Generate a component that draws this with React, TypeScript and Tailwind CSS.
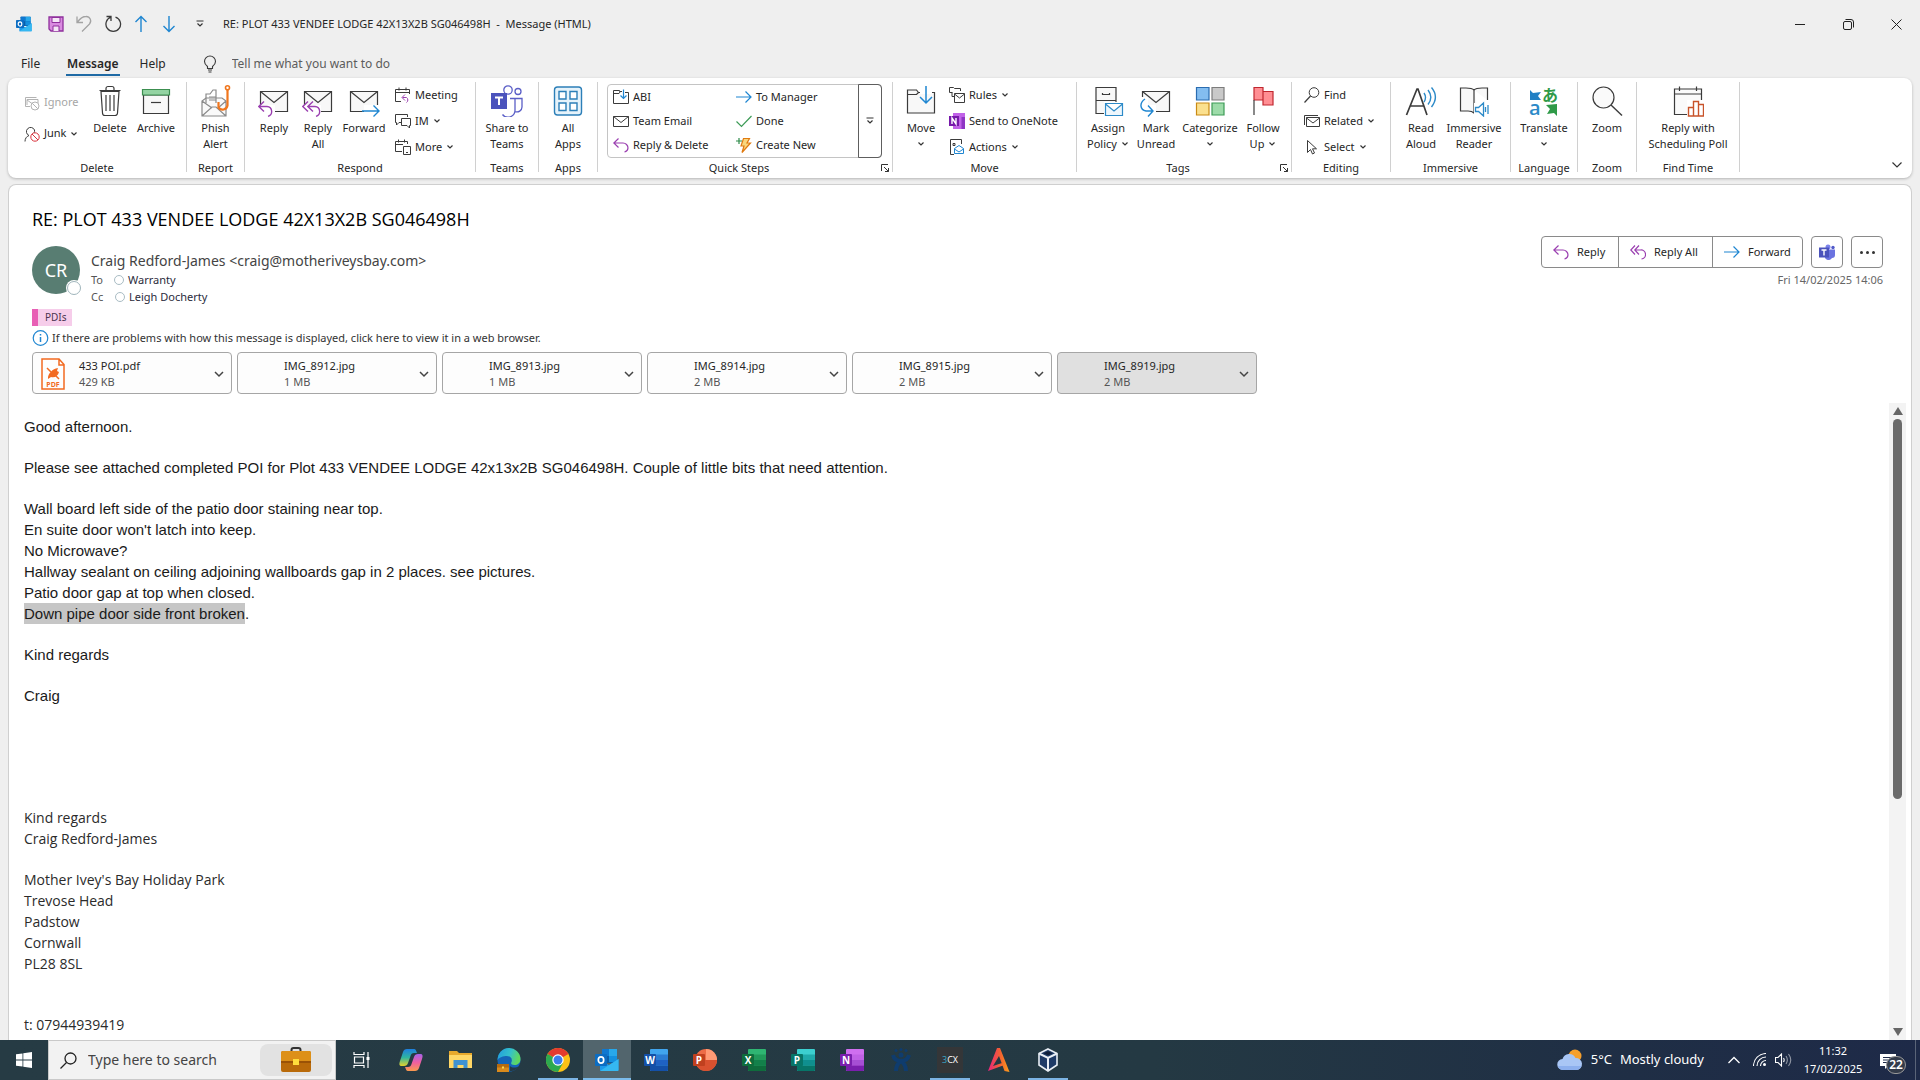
import React from 'react';

type P = { children?: React.ReactNode };

/* ---------- svg helpers ---------- */
const I16 = ({ children }: P) => (
  <svg width="16" height="16" viewBox="0 0 16 16" fill="none" stroke="#3b3b3b" className="shrink-0" aria-hidden="true">{children}</svg>
);
const I32 = ({ children }: P) => (
  <svg width="32" height="32" viewBox="0 0 32 32" fill="none" stroke="#3b3b3b" strokeWidth="1.2" className="shrink-0" aria-hidden="true">{children}</svg>
);
const Caret = () => (
  <svg width="8" height="6" viewBox="0 0 8 6" fill="none" stroke="#333" strokeWidth="1.2" className="shrink-0" aria-hidden="true"><path d="M1.500 1.500 4 4l2.500-2.500" /></svg>
);
const MiniDrop = () => (
  <svg width="10" height="8" viewBox="0 0 10 8" fill="none" stroke="#333" strokeWidth="1.2" aria-hidden="true"><path d="M1.500 1h7M2.500 3.500 5 6l2.500-2.500" /></svg>
);
const Launcher = () => (
  <svg width="10" height="10" viewBox="0 0 10 10" fill="none" stroke="#333" aria-hidden="true"><path d="M1.500 8V1.500H8M4 4l4.500 4.500M8.500 5v3.500H5" /></svg>
);

/* ---------- 16px icons ---------- */
const Outlook = ({ size }: { size: number }) => (
  <svg width={size} height={size} viewBox="0 0 24 24" aria-hidden="true">
    <rect x="7" y="1" width="15" height="14" rx="1" fill="#0a5ea8" />
    <path d="M14 1h8v7h-8z" fill="#28a8ea" /><path d="M7 1h7v7H7z" fill="#0f78d0" /><path d="M14 8h8v6h-8z" fill="#1490df" />
    <path d="M5 12l9 5 9.500-6v11a1 1 0 0 1-1 1H6a1 1 0 0 1-1-1z" fill="#1d9bea" />
    <path d="M5 23 23.500 11v11a1 1 0 0 1-1 1z" fill="#35b8f1" />
    <rect x="0" y="6" width="12" height="12" rx="1" fill="#0c6dc2" />
    <ellipse cx="6" cy="12" rx="2.700" ry="3.200" fill="none" stroke="#fff" strokeWidth="1.700" />
  </svg>
);
const Save = () => <I16><path d="M1 1h14v14H3l-2-2z" fill="#d98be0" stroke="#8f2f9c" strokeWidth="1.300" /><path d="M4 1.500h8v5H4zM5 15v-5h6v5" fill="#f5e6f7" stroke="#8f2f9c" /></I16>;
const Undo = () => <svg width="18" height="18" viewBox="0 0 18 18" fill="none" stroke="#a3a3a3" strokeWidth="1.300" aria-hidden="true"><path d="M2 1.500v6h6M2.500 7C5 3.500 8 1.500 11 1.500a4.500 4.500 0 0 1 3.500 7.500L7 16.500" /></svg>;
const Redo = () => <svg width="18" height="18" viewBox="0 0 18 18" fill="none" stroke="#3b3b3b" strokeWidth="1.300" aria-hidden="true"><path d="M2.500 1.500H7V6M7 2.200a7.300 7.300 0 1 0 4.500 0" /></svg>;
const Arrow = ({ up }: { up?: boolean }) => <svg width="16" height="18" viewBox="0 0 16 18" fill="none" stroke="#1f86d1" strokeWidth="1.400" aria-hidden="true"><path d={up ? 'M8 17V1.500M2.500 7 8 1.500 13.500 7' : 'M8 1v15.500M2.500 11 8 16.500 13.500 11'} /></svg>;
const Bulb = () => <svg width="14" height="18" viewBox="0 0 14 18" fill="none" stroke="#3b3b3b" strokeWidth="1.100" aria-hidden="true"><path d="M4.500 13.500v-2C2.500 10 1.500 8.500 1.500 6.500a5.500 5.500 0 0 1 11 0c0 2-1 3.500-3 5v2zM5 15h4M5.500 17h3" /></svg>;
const Ignore = () => <I16><g stroke="#b3b3b3"><path d="M6 11.500H1.500v-9h11M3 10V4.500h11V8M3 5l5 3.500" /><circle cx="11" cy="11" r="4" fill="#fff" /><path d="m8.200 8.200 5.600 5.600" /></g></I16>;
const Junk = () => <I16><path d="M1 15.500c0-3 1.500-5 4-6A4.200 4.200 0 1 1 10.500 4" /><path d="M10.500 4c.3 1 0 2-.5 3" /><g stroke="#d8323c"><circle cx="11" cy="11" r="4.200" fill="#fff" /><path d="m8 8 6 6" /></g></I16>;
const Meeting = () => <I16><path d="M6 14.500H.500v-12h14V7M.500 5.500h14M4 .500v3M11 .500v3" /><path d="M10 7.500 7 10.500l3 3M7.500 10.500h4a3 3 0 0 1 0 5" stroke="#9a3fb0" /></I16>;
const Im = () => <I16><path d="M6 9.500H4L1.500 12V9.500H.500v-8h12V4" /><path d="M6.500 5.500h9v7h-1V15L12 12.500H6.500z" /></I16>;
const MoreI = () => <I16><path d="M7 12.500H.500v-10h12V5M.500 5.500H8M3.500.500v3M9.500.500v3" /><path d="M8.500 7.500h7v8h-7zM11 13.500h2" stroke="#3b3b3b" /></I16>;
const FolderMove = () => <I16><path d="M9 2.500H6.500V1.500h-6v13h15v-11H12M.500 4.500H6l1-1.500" fill="none" /><path d="M10.500.500v9M7.500 6.500l3 3 3-3" stroke="#1f86d1" strokeWidth="1.200" /></I16>;
const Env = () => <I16><path d="M.500 3.500h15v10H.500zM.500 3.500 8 9.500l7.500-6" /></I16>;
const ReplyS = () => <I16><path d="M5.500 1.500.800 6l4.700 4.500M1 6h9a5 5 0 0 1 5 5v0a4.500 4.500 0 0 1-3.500 4" stroke="#9a3fb0" strokeWidth="1.200" /></I16>;
const ReplyAllS = () => <I16><path d="M5 1.500.800 6 5 10.500M9 1.500 4.800 6 9 10.500M5 6h5.500a4.500 4.500 0 0 1 1 9" stroke="#9a3fb0" strokeWidth="1.200" /></I16>;
const ForwardS = () => <I16><path d="M0 8h15M9.500 2.500 15 8l-5.500 5.500" stroke="#1f86d1" strokeWidth="1.200" /></I16>;
const Tick = () => <I16><path d="m.500 8.500 5 5L15.500 3" stroke="#3c9b56" strokeWidth="1.200" /></I16>;
const Bolt = () => <I16><path d="M7.500 1.500h6L11 6h3.500L6 15.500l2-6.500H5z" fill="#f9d77e" stroke="#e07a10" strokeWidth="1.200" /><path d="M0 4h6M3 1v6" stroke="#2e8b4a" strokeWidth="1.200" /></I16>;
const Rules = () => <I16><path d="M6 9.500H3v-4M3.500 5.500H.500v-5h4l1 1h6V4" /><path d="M5.500 6.500h10v9h-10zM5.500 7l5 4 5-4" /></I16>;
const OneNoteS = () => <svg width="16" height="16" viewBox="0 0 16 16" className="shrink-0" aria-hidden="true"><path d="M4 0h12v16H4z" fill="#c162e8" /><path d="M12.500 4H16v12h-3.500z" fill="#8f35c4" /><path d="M0 3h10v10H0z" fill="#7719aa" /><path d="M3 11V5l4 6V5" stroke="#fff" strokeWidth="1.400" fill="none" /></svg>;
const ActionsI = () => <I16><path d="M5 15.500H1.500v-15h11V5M4 4.500h2v2H4z" /><path d="M5.500 9.500 10 6.500l4.500 3v5h-9zM5.500 10l4.500 3 4.500-3" stroke="#1f86d1" /></I16>;
const Find = () => <I16><circle cx="10" cy="5.500" r="4.800" /><path d="M6.500 9 .500 15.500" strokeWidth="1.200" /></I16>;
const Related = () => <I16><path d="M.500 12V2.500H14M2.500 4.500h13v9h-13zM2.500 5 9 10l6.500-5" /></I16>;
const Cursor = () => <I16><path d="M3.500 1.500v12l3-3 2 4.500 2-1-2-4.200h4z" /></I16>;

/* ---------- 32px icons ---------- */
const BigEnv = ({ children }: P) => <I32><path d="M2.500 6.500h27v20h-27z" fill="#f8f8f8" /><path d="M2.500 6.500 16 17.500l13.500-11" />{children}</I32>;
const Trash = () => <I32><path d="M7 6.500 8.500 28a2.500 2.500 0 0 0 2.500 2.500h10a2.500 2.500 0 0 0 2.500-2.500L25 6.500z" fill="#fff" /><path d="M5.500 5.500h21M12 5.500v-2a2 2 0 0 1 2-2h4a2 2 0 0 1 2 2v2M12 10v16M16 10v16M20 10v16" /></I32>;
const Archive = () => <I32><path d="M3.500 10h25v18.500h-25z" fill="#f8f8f8" /><path d="M2.500 4.500h27V10h-27z" fill="#93d3a2" stroke="#3c8f50" /><path d="M11 17.500h10" /></I32>;
const Phish = () => <I32><path d="M2 31V16l4-3h16l4 3v15zM2 31l10-9h4l10 9M2 16l10 7M26 16l-8 7" stroke="#8a8a8a" fill="#fafafa" /><path d="M6 18V9h4l3-4h3v13M9 12h7M9 15h7" stroke="#8a8a8a" /><path d="M27.500 3.500v17a5 5 0 0 1-9 2V17" stroke="#f0761d" strokeWidth="2.200" /><circle cx="27.500" cy="2.800" r="2" stroke="#f0761d" strokeWidth="1.600" fill="#fff" /></I32>;
const ReplyL = () => <BigEnv><path d="M0 20h17v12H0z" fill="#fff" stroke="none" /><path d="M6 16.500.800 21.500 6 26.500M1 21.500h8a5 5 0 0 1 1 9.800" stroke="#9a3fb0" strokeWidth="1.400" /></BigEnv>;
const ReplyAllL = () => <BigEnv><path d="M0 20h19v12H0z" fill="#fff" stroke="none" /><path d="M6 16.500.800 21.500 6 26.500M11 16.500 5.800 21.500l5.200 5M6 21.500h7a5 5 0 0 1 1 9.800" stroke="#9a3fb0" strokeWidth="1.400" /></BigEnv>;
const ForwardL = () => <BigEnv><path d="M16 20h16v12H16z" fill="#fff" stroke="none" /><path d="M14 26h17M25.500 20.500 31 26l-5.500 5.500" stroke="#1f86d1" strokeWidth="1.400" /></BigEnv>;
const TeamsL = () => <I32><g stroke="#5b5fc7" strokeWidth="1.300"><circle cx="17" cy="5" r="4.200" fill="#fff" /><circle cx="27" cy="6.500" r="3" fill="#fff" /><path d="M19 13.500h5V25a7 7 0 0 1-12.500 4.500M24 13.500h7V22a5 5 0 0 1-7 4.500" /></g><path d="M0 8h16v16H0z" fill="#4b53bc" stroke="none" /><path d="M4 12.500h8M8 12.500V20" stroke="#fff" strokeWidth="2" /></I32>;
const AppsL = () => <I32><g stroke="#2c7fb8" strokeWidth="1.400"><rect x="2.500" y="2" width="27" height="28" rx="3" fill="#e6f3fb" /><path d="M7 6.500h7v7.500H7zM18 6.500h7v7.500h-7zM7 18h7v7.500H7zM18 18h7v7.500h-7z" fill="#fff" /></g></I32>;
const MoveL = () => <I32><path d="M2.500 5h9l2 2.500h16V28h-27z" fill="#f8f8f8" /><path d="M2.500 9.500h9l2-2" /><path d="M15 4h12v5H15z" fill="#fff" stroke="none" /><path d="M21 1v17M15 12l6 6 6-6" stroke="#1f86d1" strokeWidth="1.500" /></I32>;
const Policy = () => <I32><path d="M4 2.500h20v26H4z" fill="#f8f8f8" /><path d="M4 15.500h20M10.500 8v1.500h7V8" /><path d="M12 17h20v15H12z" fill="#fff" stroke="none" /><path d="M13.500 18.500h17v12h-17zM13.500 19l8.500 7 8.500-7" stroke="#2c8ac8" fill="#eef7fd" /></I32>;
const Unread = () => <BigEnv><path d="M0 12h8v8h8v12H0z" fill="#fff" stroke="none" /><path d="M5 14c-6 4-5 11 1 12h6M8 20.500l5 5.500-5 5.500" stroke="#1f86d1" strokeWidth="1.400" /></BigEnv>;
const Categ = () => <I32><path d="M2.500 2.500h12.500V15H2.500z" fill="#83bdf0" stroke="#2a6cb0" /><path d="M18 2.500h12V15H18z" fill="#c9c9c9" stroke="#7c7c7c" /><path d="M2.500 18H15v12H2.500z" fill="#fbe08e" stroke="#c98a14" /><path d="M18 18h12v12H18z" fill="#9ddba9" stroke="#3c9b56" /></I32>;
const Flag = () => <I32><path d="M7 2.500h9V15H7zM16 6.500h10V20H16z" fill="#ff8e93" stroke="#c0272f" /><path d="M7 15v15" /></I32>;
const ReadAloud = () => <I32><path d="M1.500 30 12 4h1l9 26M5.500 21h13" strokeWidth="1.700" /><g stroke="#2c8ac8" strokeWidth="1.400"><path d="M19 8c2 3 2 6 0 9M23 5c3.500 4.500 3.500 10 0 14.500M26.500 2.500c5 6 5 13 0 19.500" /></g></I32>;
const Reader = () => <I32><path d="M16 5c-2-2-6-2-8-2H2.500v23H10c3 0 5 1 6 2 1-1 2-1.500 4-2M16 5c2-2 5-2 8-2h5.500v12" fill="#f8f8f8" /><path d="M16 5v22" /><path d="M16 18h16v14H16z" fill="#fff" stroke="none" /><path d="M17.500 22.500h3l5-4.500v13l-5-4.500h-3zM27.500 22v5M30 20v9" stroke="#2c8ac8" strokeWidth="1.300" /></I32>;
const Translate = () => (
  <svg width="32" height="32" viewBox="0 0 32 32" className="shrink-0 overflow-visible" aria-hidden="true">
    <path d="M2 5l3 3 8-1-3 4 3 4H2z" fill="#2180c4" /><path d="M29 19v12l-3-3-7 1 3-5-4-4z" fill="#2f9a48" />
    <text x="1" y="30" fontSize="20" fontFamily="Open Sans, sans-serif" fontWeight="600" fill="#2c8ac8">a</text>
    <text x="14" y="16" fontSize="16" fontFamily="Noto Sans CJK JP, sans-serif" fontWeight="700" fill="#2f9a48">あ</text>
  </svg>
);
const ZoomL = () => <I32><circle cx="12.500" cy="12.500" r="10.500" fill="#fafafa" /><path d="m20 20 11 10.500" strokeWidth="1.400" /></I32>;
const Poll = () => <I32><path d="M2.500 4h27v25.500h-27z" fill="#fafafa" /><path d="M2.500 9h27M7.500 1.500V6M24.500 1.500V6" /><path d="M15 15h17v17H15z" fill="#fff" stroke="none" /><path d="M16.500 22.500h5V31h-5zM21.500 16.500h5V31h-5zM26.500 19.500h5V31h-5z" stroke="#c8532a" fill="#fff" strokeWidth="1.400" /></I32>;

/* ---------- ribbon pieces ---------- */
const Big = ({ icon, a, b, caret, w }: { icon: React.ReactNode; a: string; b?: string; caret?: boolean; w: string }) => (
  <button className={'flex flex-col items-center gap-[3px] pt-[3px] shrink-0 whitespace-nowrap ' + w}>
    {icon}
    <span className="flex flex-col items-center leading-4">
      <span>{a}</span>
      {(b || caret) && <span className="flex h-4 items-center gap-1">{b}{caret && <Caret />}</span>}
    </span>
  </button>
);
const Small = ({ icon, t, caret, h = 'h-[26px]', c = '' }: { icon: React.ReactNode; t: string; caret?: boolean; h?: string; c?: string }) => (
  <button className={'flex items-center gap-1 whitespace-nowrap ' + h + ' ' + c}>{icon}<span>{t}</span>{caret && <Caret />}</button>
);
const Group = ({ label, w, launch, children }: P & { label: string; w: string; launch?: boolean }) => (
  <section className={'flex shrink-0 ' + w} aria-label={label}>
    <div className="flex min-w-0 flex-1 flex-col">
      <div className="flex h-[78px]">{children}</div>
      <div className="flex h-4 items-center">
        <span className="flex-1 text-center">{label}</span>
        {launch && <button aria-label={label + ' settings'} className="w-3"><Launcher /></button>}
      </div>
    </div>
    <div className="h-[90px] w-px bg-[#d0d0d0]" />
  </section>
);

/* ---------- message data ---------- */
const files = [
  ['433 POI.pdf', '429 KB'], ['IMG_8912.jpg', '1 MB'], ['IMG_8913.jpg', '1 MB'],
  ['IMG_8914.jpg', '2 MB'], ['IMG_8915.jpg', '2 MB'], ['IMG_8919.jpg', '2 MB'],
];
const Pdf = () => (
  <svg width="24" height="32" viewBox="0 0 24 32" fill="none" stroke="#f26a21" strokeWidth="1.500" aria-hidden="true">
    <path d="M1 1h17l5 5.500V31H1zM18 1v6h5" />
    <path d="M7 19c1-4 4-8 10-9l-1 3 2 1c-1 4-4 6-8 5l-3 2zM8 12l4 3" fill="#f26a21" stroke="none" />
    <path d="m6 10 4 4M14 17l4 4" />
    <text x="12" y="28.500" textAnchor="middle" fontSize="7" fontWeight="700" fontFamily="Open Sans, sans-serif" fill="#f26a21" stroke="none">PDF</text>
  </svg>
);
const Gap = () => <div className="h-5" />;

/* ---------- taskbar icons ---------- */
const Office = ({ l, a, b, c, d, round }: { l: string; a: string; b: string; c: string; d: string; round?: boolean }) => (
  <svg width="24" height="22" viewBox="0 0 24 22" aria-hidden="true">
    {round ? (
      <><circle cx="13" cy="11" r="11" fill={a} /><path d="M13 0a11 11 0 0 1 11 11H13z" fill={b} /><path d="M2 11h22a11 11 0 0 1-22 0z" fill={c} /></>
    ) : (
      <><rect x="6" width="18" height="22" rx="1" fill={a} /><path d="M6 5.500h18V11H6z" fill={b} /><path d="M6 11h18v5.500H6z" fill={c} /><path d="M6 16.500h18V21a1 1 0 0 1-1 1H7a1 1 0 0 1-1-1z" fill={d} /></>
    )}
    <rect y="5" width="12" height="12" rx="1" fill={d} />
    <text x="6" y="14.500" textAnchor="middle" fontSize="10" fontWeight="700" fontFamily="Open Sans, sans-serif" fill="#fff">{l}</text>
  </svg>
);
const TaskView = () => <svg width="18" height="18" viewBox="0 0 18 18" fill="none" stroke="#fff" strokeWidth="1.200" aria-hidden="true"><path d="M1 1v2.500h10V1M1 17v-2.500h10V17M1.500 6h9v6h-9zM15 1v16" /><path d="M13.500 6h3v3h-3z" fill="#fff" stroke="none" /></svg>;
const Copilot = () => (
  <svg width="24" height="24" viewBox="0 0 24 24" aria-hidden="true">
    <defs>
      <linearGradient id="cpa" x1="0" y1="0" x2="0" y2="1"><stop offset="0" stopColor="#1f7fe0" /><stop offset=".5" stopColor="#2fb6a0" /><stop offset="1" stopColor="#e6d02c" /></linearGradient>
      <linearGradient id="cpb" x1="0" y1="0" x2="0" y2="1"><stop offset="0" stopColor="#a862ea" /><stop offset=".5" stopColor="#ef5fa0" /><stop offset="1" stopColor="#f99a4d" /></linearGradient>
    </defs>
    <path d="M8 1h7c2 0 2 2 3 4h-3c-2 0-3 1-3.500 3L9 15c-.500 2-2 3-4 3H3c-3 0-3-2-2-5L4 4c.600-2 2-3 4-3z" fill="url(#cpa)" />
    <path d="M16 23H9c-2 0-2-2-3-4h3c2 0 3-1 3.500-3L15 9c.500-2 2-3 4-3h2c3 0 3 2 2 5l-3 9c-.600 2-2 3-4 3z" fill="url(#cpb)" />
  </svg>
);
const Explorer = () => <svg width="23" height="20" viewBox="0 0 23 20" aria-hidden="true"><path d="M0 1h8l2 2h13v15H0z" fill="#e8a92c" /><path d="M0 5h23v13H0z" fill="#ffd766" /><path d="M4.500 10h14v8h-4v-3h-6v3h-4z" fill="#3f92d2" /></svg>;
const Edge = () => (
  <svg width="26" height="24" viewBox="0 0 26 24" aria-hidden="true">
    <defs><linearGradient id="edg" x1="0" y1="0" x2="1" y2=".3"><stop offset="0" stopColor="#1f9be0" /><stop offset=".6" stopColor="#35c1c9" /><stop offset="1" stopColor="#5fd860" /></linearGradient></defs>
    <circle cx="13" cy="12" r="11.500" fill="#1565b8" />
    <path d="M1.500 12A11.500 11.500 0 0 1 24.500 11c0 4-3 6-6 6s-4-1-3-3c1.500-4-2-6.500-6-6s-7 2-8 4z" fill="url(#edg)" />
    <path d="M14 18c2 2 6 2 9 0-2 4-6 5.500-9 5z" fill="#263a44" />
    <path d="M1 16h12v8H1z" fill="#d98a1c" /><path d="M1 16h12v3.500H1z" fill="#b56a10" /><path d="M6 18.500h2v2H6z" fill="#ffd94d" />
  </svg>
);
const Chrome = () => <svg width="24" height="24" viewBox="0 0 24 24" aria-hidden="true"><circle cx="12" cy="12" r="12" fill="#fbc116" /><path d="M12 12 1.600 6A12 12 0 0 1 22.400 6z" fill="#e33b2e" /><path d="M12 12 1.600 6A12 12 0 0 0 12 24l5-9z" fill="#2da94f" /><circle cx="12" cy="12" r="5.700" fill="#fff" /><circle cx="12" cy="12" r="4.500" fill="#3b7ded" /></svg>;
const Jira = () => <svg width="20" height="24" viewBox="0 0 20 24" fill="none" stroke="#0f3c6e" strokeWidth="4" aria-hidden="true"><path d="M2 7c1 4 4 6 8 6s7-2 8-6M5 23c0-5 2-8 5-10 3 2 5 5 5 10" /><g fill="#0f3c6e" stroke="none"><circle cx="10" cy="7" r="2.500" /><circle cx="5" cy="2.500" r="1.500" /><circle cx="10" cy="1.500" r="1.500" /><circle cx="15" cy="2.500" r="1.500" /></g></svg>;
const Cx = () => <svg width="26" height="26" viewBox="0 0 26 26" aria-hidden="true"><path d="M0 0h26v26H0z" fill="#343638" /><text x="13" y="16" textAnchor="middle" fontSize="9" fontFamily="Open Sans, sans-serif" fill="#fff"><tspan fill="#38a8c8">3</tspan>CX</text></svg>;
const AIcon = () => <svg width="22" height="24" viewBox="0 0 22 24" fill="none" aria-hidden="true"><defs><linearGradient id="aic"><stop offset="0" stopColor="#e8247c" /><stop offset=".6" stopColor="#f4652e" /><stop offset="1" stopColor="#fba01c" /></linearGradient></defs><path d="M9 0h3l9.500 24-5-1L11 8 5 18l9-3 1 2.500L0 23z" fill="url(#aic)" /></svg>;
const VBox = () => <svg width="20" height="24" viewBox="0 0 20 24" aria-hidden="true"><path d="M10 1 19 5.500V17l-9 6-9-6V5.500z" fill="#1d3a66" stroke="#e8eef5" strokeWidth="1.600" /><path d="M1 5.500 10 10l9-4.500M10 10v13" fill="none" stroke="#e8eef5" strokeWidth="2" /><path d="m5.500 5.200 4.500-2 4.500 2-4.500 2z" fill="#0d1d38" /></svg>;
const Briefcase = () => <svg width="30" height="26" viewBox="0 0 30 26" aria-hidden="true"><path d="M10.500 5V3a2 2 0 0 1 2-2h5a2 2 0 0 1 2 2v2" fill="none" stroke="#333" strokeWidth="2" /><rect y="4" width="30" height="21" rx="2" fill="#b96a0a" /><path d="M0 6a2 2 0 0 1 2-2h26a2 2 0 0 1 2 2v8H0z" fill="#dd9018" /><path d="M0 14h30v2H0z" fill="#9a5206" /><path d="M12 12h6v6h-6z" fill="#ffdd3c" /></svg>;

const apps: [string, React.ReactNode, string][] = [
  ['Task View', <TaskView />, ''],
  ['Copilot', <Copilot />, ''],
  ['File Explorer', <Explorer />, ''],
  ['Edge', <Edge />, ''],
  ['Chrome', <Chrome />, 'run'],
  ['Outlook', <Outlook size={24} />, 'on'],
  ['Word', <Office l="W" a="#41a5ee" b="#2b7cd3" c="#1f62c4" d="#1450a8" />, ''],
  ['PowerPoint', <Office l="P" a="#ed6c47" b="#ff9a75" c="#d9512f" d="#c0401f" round />, ''],
  ['Excel', <Office l="X" a="#2fb572" b="#21995a" c="#13804a" d="#0f6c3c" />, ''],
  ['Publisher', <Office l="P" a="#3ccfcf" b="#1fa9a9" c="#0f8f8f" d="#077568" />, ''],
  ['OneNote', <Office l="N" a="#cf6ff0" b="#c062e6" c="#a64fd4" d="#7a1fad" />, ''],
  ['Jira', <Jira />, ''],
  ['3CX', <Cx />, 'run'],
  ['Atera', <AIcon />, ''],
  ['VirtualBox', <VBox />, 'run'],
];

export default function App() {
  return (
    <div className="flex h-screen flex-col overflow-hidden bg-[#efefef] font-['Noto_Sans','Open_Sans',sans-serif] text-[11px] text-[#262626]">
      {/* title bar */}
      <header className="flex h-12 shrink-0 items-center">
        <div className="flex items-center gap-[13px] pl-4">
          <Outlook size={16} />
          <div className="flex items-center gap-[11px] pl-[3px]">
            <button aria-label="Save"><Save /></button>
            <button aria-label="Undo"><Undo /></button>
            <button aria-label="Redo"><Redo /></button>
            <button aria-label="Previous item"><Arrow up /></button>
            <button aria-label="Next item" className="px-px"><Arrow /></button>
            <button aria-label="Customise toolbar" className="px-1.5"><MiniDrop /></button>
          </div>
        </div>
        <h1 className="whitespace-pre pl-3">RE: PLOT 433 VENDEE LODGE 42X13X2B SG046498H  -  Message (HTML)</h1>
        <div className="ml-auto flex">
          <button aria-label="Minimise" className="flex h-12 w-12 items-center justify-center"><svg width="10" height="10" stroke="#222"><path d="M0 5.500h10" /></svg></button>
          <button aria-label="Restore" className="flex h-12 w-12 items-center justify-center"><svg width="11" height="11" viewBox="0 0 11 11" fill="none" stroke="#222"><rect x=".5" y="2.500" width="8" height="8" rx="1.500" /><path d="M2.500.500h5.500a2.500 2.500 0 0 1 2.500 2.500v5.500" /></svg></button>
          <button aria-label="Close" className="flex h-12 w-12 items-center justify-center"><svg width="11" height="11" viewBox="0 0 11 11" stroke="#222"><path d="m.500.500 10 10m0-10-10 10" /></svg></button>
        </div>
      </header>

      {/* tabs */}
      <nav className="flex h-[30px] shrink-0 items-start pl-[21px] text-xs">
        <button className="h-8 w-[45px] text-left">File</button>
        <button className="flex h-7 items-end border-b-2 border-[#1f6aa5] px-px font-semibold leading-5">Message</button>
        <button className="ml-5 h-8">Help</button>
        <label className="flex h-8 items-center gap-[15px] pl-[37px]">
          <Bulb />
          <input aria-label="Tell me what you want to do" placeholder="Tell me what you want to do" className="w-52 bg-transparent outline-none placeholder:text-[#5c5c5c]" />
        </label>
      </nav>

      {/* ribbon */}
      <div className="mx-2 flex h-[100px] shrink-0 items-start rounded-lg bg-white pt-1 shadow-[0_1px_3px_rgba(0,0,0,0.25)]">
        <Group label="Delete" w="w-[179px]">
          <div className="flex w-20 flex-col pl-4 pt-[5px]">
            <Small icon={<Ignore />} t="Ignore" h="h-[31px]" c="text-[#a6a6a6]" />
            <Small icon={<Junk />} t="Junk" caret h="h-[31px]" />
          </div>
          <Big icon={<Trash />} a="Delete" w="w-11" />
          <Big icon={<Archive />} a="Archive" w="w-12" />
        </Group>
        <Group label="Report" w="w-[58px]">
          <Big icon={<Phish />} a="Phish" b="Alert" w="w-full" />
        </Group>
        <Group label="Respond" w="w-[231px]">
          <div className="flex pl-[7px]">
            <Big icon={<ReplyL />} a="Reply" w="w-11" />
            <Big icon={<ReplyAllL />} a="Reply" b="All" w="w-11" />
            <Big icon={<ForwardL />} a="Forward" w="w-12" />
          </div>
          <div className="flex flex-col pl-[7px]">
            <Small icon={<Meeting />} t="Meeting" />
            <Small icon={<Im />} t="IM" caret />
            <Small icon={<MoreI />} t="More" caret />
          </div>
        </Group>
        <Group label="Teams" w="w-[63px]"><Big icon={<TeamsL />} a="Share to" b="Teams" w="w-full" /></Group>
        <Group label="Apps" w="w-[59px]"><Big icon={<AppsL />} a="All" b="Apps" w="w-full" /></Group>
        <Group label="Quick Steps" w="w-[295px]" launch>
          <div className="ml-[9px] mt-0.5 flex h-[74px] w-[275px] rounded border border-[#c4c4c4]">
            <div className="grid flex-1 grid-cols-2 pl-[5px]">
              <Small icon={<FolderMove />} t="ABI" h="h-6" />
              <Small icon={<ForwardS />} t="To Manager" h="h-6" />
              <Small icon={<Env />} t="Team Email" h="h-6" />
              <Small icon={<Tick />} t="Done" h="h-6" />
              <Small icon={<ReplyS />} t="Reply & Delete" h="h-6" />
              <Small icon={<Bolt />} t="Create New" h="h-6" />
            </div>
            <button aria-label="More quick steps" className="-m-px flex w-6 items-center justify-center rounded-r border border-[#5e5e5e]"><MiniDrop /></button>
          </div>
        </Group>
        <Group label="Move" w="w-[184px]">
          <Big icon={<MoveL />} a="Move" caret w="w-14" />
          <div className="flex flex-col">
            <Small icon={<Rules />} t="Rules" caret />
            <Small icon={<OneNoteS />} t="Send to OneNote" />
            <Small icon={<ActionsI />} t="Actions" caret />
          </div>
        </Group>
        <Group label="Tags" w="w-[215px]" launch>
          <div className="flex pl-1.5">
            <Big icon={<Policy />} a="Assign" b="Policy" caret w="w-[50px]" />
            <Big icon={<Unread />} a="Mark" b="Unread" w="w-[46px]" />
            <Big icon={<Categ />} a="Categorize" caret w="w-[62px]" />
            <Big icon={<Flag />} a="Follow" b="Up" caret w="w-11" />
          </div>
        </Group>
        <Group label="Editing" w="w-[99px]">
          <div className="flex flex-col pl-3">
            <Small icon={<Find />} t="Find" />
            <Small icon={<Related />} t="Related" caret />
            <Small icon={<Cursor />} t="Select" caret />
          </div>
        </Group>
        <Group label="Immersive" w="w-[120px]">
          <div className="flex pl-[5px]">
            <Big icon={<ReadAloud />} a="Read" b="Aloud" w="w-[50px]" />
            <Big icon={<Reader />} a="Immersive" b="Reader" w="w-[56px]" />
          </div>
        </Group>
        <Group label="Language" w="w-[67px]"><Big icon={<Translate />} a="Translate" caret w="w-full" /></Group>
        <Group label="Zoom" w="w-[59px]"><Big icon={<ZoomL />} a="Zoom" w="w-full" /></Group>
        <Group label="Find Time" w="w-[103px]"><Big icon={<Poll />} a="Reply with" b="Scheduling Poll" w="w-full" /></Group>
        <button aria-label="Collapse ribbon" className="mb-2 ml-auto mr-[10px] self-end"><svg width="10" height="10" viewBox="0 0 10 10" fill="none" stroke="#333" strokeWidth="1.200"><path d="m.500 2.500 4.500 4.500 4.500-4.500" /></svg></button>
      </div>

      {/* message */}
      <main className="mx-2 mt-[6px] flex min-h-0 flex-1 flex-col rounded-t-lg border border-b-0 border-[#cfcfcf] bg-white">
        <div className="flex shrink-0 justify-between pl-[23px] pr-[28px]">
          <div>
            <h2 className="pt-[22px] font-['Open_Sans',sans-serif] text-lg leading-6 text-black">RE: PLOT 433 VENDEE LODGE 42X13X2B SG046498H</h2>
            <div className="mt-[15px] flex gap-[11px]">
              <div className="relative flex h-12 w-12 items-center justify-center rounded-full bg-[#587d72] text-lg text-white">
                CR<span className="absolute -bottom-px -right-px h-3.5 w-3.5 rounded-full border border-[#9fb5bb] bg-white ring-1 ring-white" />
              </div>
              <div className="pt-[5px]">
                <p className="text-sm leading-5 text-[#444]">Craig Redford-James &lt;craig@motheriveysbay.com&gt;</p>
                <p className="flex h-[18px] items-center text-[#555]"><span className="w-[23px]">To</span><span className="mr-1 h-2.5 w-2.5 rounded-full border border-[#a9bcc4]" /><span className="text-[#2b2b3b]">Warranty</span></p>
                <p className="flex h-4 items-center text-[#555]"><span className="w-6">Cc</span><span className="mr-1 h-2.5 w-2.5 rounded-full border border-[#a9bcc4]" /><span className="text-[#2b2b3b]">Leigh Docherty</span></p>
              </div>
            </div>
            <span className="mt-1 flex h-[17px] w-10 items-center border-l-[6px] border-[#e85fb5] bg-[#f6cdea] pl-[7px] text-[10px] text-[#4a3350]">PDIs</span>
            <p className="mt-1 flex h-4 items-center gap-[3px] text-[#333]">
              <svg width="17" height="16" viewBox="0 0 17 16" fill="none" stroke="#1f86d1" strokeWidth="1.200" aria-hidden="true"><circle cx="8.500" cy="8" r="7.300" /><path d="M8.500 7v5M8.500 4v1.500" strokeWidth="1.500" /></svg>
              If there are problems with how this message is displayed, click here to view it in a web browser.
            </p>
          </div>
          <div className="flex flex-col items-end gap-1 pt-[51px]">
            <div className="flex gap-2">
              <div className="flex h-8 divide-x divide-[#8a8a8a] rounded border border-[#8a8a8a]">
                <button className="flex w-[77px] items-center gap-2 pl-[11px]"><ReplyS />Reply</button>
                <button className="flex w-[94px] items-center gap-2 whitespace-nowrap pl-[11px]"><ReplyAllS />Reply All</button>
                <button className="flex w-[89px] items-center gap-2 pl-[11px]"><ForwardS />Forward</button>
              </div>
              <button aria-label="Share to Teams" className="flex h-8 w-8 items-center justify-center rounded border border-[#8a8a8a]">
                <svg width="16" height="16" viewBox="0 0 16 16" aria-hidden="true"><circle cx="9" cy="3" r="2.500" fill="#7b83eb" /><circle cx="14" cy="3.500" r="1.700" fill="#5059c9" /><path d="M6 5.500h10V11a3 3 0 0 1-3 3 4 4 0 0 1-7 0z" fill="#6b73e0" /><path d="M0 3.500h10v10H0z" fill="#4b53bc" /><path d="M2.500 6h5M5 6v5.500" stroke="#fff" strokeWidth="1.400" /></svg>
              </button>
              <button aria-label="More actions" className="flex h-8 w-8 items-center justify-center gap-[3px] rounded border border-[#8a8a8a]">
                <i className="h-[3px] w-[3px] rounded-full bg-[#333]" /><i className="h-[3px] w-[3px] rounded-full bg-[#333]" /><i className="h-[3px] w-[3px] rounded-full bg-[#333]" />
              </button>
            </div>
            <time className="leading-4 text-[#666]">Fri 14/02/2025 14:06</time>
          </div>
        </div>

        <ul className="mt-1.5 flex shrink-0 gap-[5px] pl-[23px]">
          {files.map(([n, s], i) => (
            <li key={n} className={'flex h-[42px] w-[200px] items-center rounded border border-[#a6a6a6] pr-[7px] pt-px ' + (i === 5 ? 'bg-[#e0e0e0]' : 'bg-[#fdfdfd]')}>
              <span className="w-[46px] pl-2">{i === 0 && <Pdf />}</span>
              <span className="flex-1 leading-4"><span className="block">{n}</span><span className="block text-[#555]">{s}</span></span>
              <button aria-label={'Options for ' + n}><svg width="10" height="8" viewBox="0 0 10 8" fill="none" stroke="#444" strokeWidth="1.500"><path d="m1 2 4 4 4-4" /></svg></button>
            </li>
          ))}
        </ul>

        <div className="mt-[9px] flex min-h-0 flex-1">
          <article className="min-w-0 flex-1 overflow-hidden pl-[15px] pt-[13px] font-['Liberation_Sans',sans-serif] text-[15px] leading-[21px] text-[#1a1a1a]">
            <p>Good afternoon.</p>
            <Gap />
            <p>Please see attached completed POI for Plot 433 VENDEE LODGE 42x13x2B SG046498H. Couple of little bits that need attention.</p>
            <Gap />
            <p>Wall board left side of the patio door staining near top.</p>
            <p>En suite door won't latch into keep.</p>
            <p>No Microwave?</p>
            <p>Hallway sealant on ceiling adjoining wallboards gap in 2 places. see pictures.</p>
            <p>Patio door gap at top when closed.</p>
            <p><mark className="inline-block bg-[#c6c6c6] text-inherit">Down pipe door side front broken</mark>.</p>
            <Gap />
            <p>Kind regards</p>
            <Gap />
            <p>Craig</p>
            <div className="pt-[101px] font-['Open_Sans',sans-serif] text-sm leading-[21px] text-[#2b2b2b]">
              <p>Kind regards</p>
              <p>Craig Redford-James</p>
              <Gap />
              <p>Mother Ivey's Bay Holiday Park</p>
              <p>Trevose Head</p>
              <p>Padstow</p>
              <p>Cornwall</p>
              <p>PL28 8SL</p>
              <Gap />
              <Gap />
              <p>t: 07944939419</p>
              <p>e: <a href="mailto:craig@motheriveysbay.com" className="text-[#2a6fa8]">Craig@motheriveysbay.com</a></p>
            </div>
          </article>
          <div className="mr-[5px] flex w-[17px] flex-col items-center justify-between bg-[#f3f3f3] py-1">
            <div className="flex flex-col items-center gap-1">
              <svg width="10" height="8" aria-hidden="true"><path d="m5 0 5 8H0z" fill="#666" /></svg>
              <div className="h-[380px] w-[9px] rounded-full bg-[#6b6b6b]" />
            </div>
            <svg width="10" height="8" aria-hidden="true"><path d="M0 0h10L5 8z" fill="#666" /></svg>
          </div>
        </div>
      </main>

      {/* taskbar */}
      <footer className="flex h-10 shrink-0 bg-[linear-gradient(90deg,#263b44_0%,#243943_60%,#1f2e45_85%,#1e2a48_100%)] text-white">
        <button aria-label="Start" className="flex w-12 items-center justify-center"><svg width="16" height="16" viewBox="0 0 16 16" fill="#fff"><path d="M0 2.300 6.500 1.400v6.200H0zM7.300 1.300 16 0v7.600H7.300zM0 8.400h6.500v6.200L0 13.700zM7.300 8.400H16V16l-8.700-1.300z" /></svg></button>
        <label className="flex w-72 items-center border border-[#c9c9c9] bg-[#f2f2f2] pl-[11px] pr-[3px] text-[#333]">
          <svg width="17" height="17" viewBox="0 0 17 17" fill="none" stroke="#222" strokeWidth="1.300" aria-hidden="true"><circle cx="10.500" cy="6.500" r="5.500" /><path d="m6.500 10.500-6 6" /></svg>
          <input aria-label="Search" placeholder="Type here to search" className="ml-[11px] min-w-0 flex-1 bg-transparent text-sm outline-none placeholder:text-[#444]" />
          <span className="flex h-8 w-[72px] items-center justify-center rounded-lg bg-[#e2e2e2]"><Briefcase /></span>
        </label>
        <div className="ml-0.5 flex gap-px">
          {apps.map(([n, ic, s]) => (
            <button key={n} aria-label={n} className={'flex w-12 flex-col items-center ' + (s === 'on' ? 'bg-[#52656d]' : '')}>
              <span className="flex flex-1 items-center">{ic}</span>
              <span className={'-mt-0.5 h-0.5 ' + (s === 'on' ? 'w-full bg-[#7cbcec]' : s === 'run' ? 'w-10 bg-[#7cb4e4]' : 'w-10')} />
            </button>
          ))}
        </div>
        <div className="ml-auto flex items-center">
          <button className="flex items-center gap-2 text-[13px]">
            <svg width="26" height="22" viewBox="0 0 26 22" aria-hidden="true"><circle cx="18" cy="7" r="6.500" fill="#f6a02d" /><path d="M6 21a5.500 5.500 0 0 1-.500-11A7 7 0 0 1 18.500 9 6 6 0 0 1 19.500 21z" fill="#a9c6f5" /><path d="M1 17a5.500 5.500 0 0 0 5 4h13.500a6 6 0 0 0 5-4z" fill="#8db0ee" /></svg>
            <span>5°C</span><span>Mostly cloudy</span>
          </button>
          <button aria-label="Show hidden icons" className="ml-6"><svg width="12" height="8" viewBox="0 0 12 8" fill="none" stroke="#fff" strokeWidth="1.300"><path d="m.500 7 5.500-5.500L11.500 7" /></svg></button>
          <button aria-label="Network" className="ml-[13px]"><svg width="14" height="14" viewBox="0 0 14 14" fill="none" stroke="#fff" strokeWidth="1.100"><path d="M.500 13A12.500 12.500 0 0 1 13 .500M4 13a9 9 0 0 1 9-9M7.500 13A5.500 5.500 0 0 1 13 7.500" /><circle cx="11.500" cy="11.500" r="1.500" fill="#fff" stroke="none" /></svg></button>
          <button aria-label="Volume" className="ml-2"><svg width="17" height="14" viewBox="0 0 17 14" fill="none" stroke="#fff" strokeWidth="1.100"><path d="M.500 4.500h2.500L6.500 1v12L3 9.500H.500zM8.500 5c1 1.500 1 2.500 0 4" /><path d="M11 3c2 3 2 5 0 8M13.500 1c3 4 3 8 0 12" opacity=".5" /></svg></button>
          <div className="ml-2.5 flex w-[62px] flex-col items-center text-[11px] leading-[18px]"><span>11:32</span><span>17/02/2025</span></div>
          <button aria-label="Notifications, 22 new" className="relative ml-4 mr-[11px] h-7 w-6">
            <svg width="17" height="16" viewBox="0 0 17 16" className="mt-1" aria-hidden="true"><path d="M0 0h16v12H8l-3 3v-3H0z" fill="#fff" /><path d="M3 3.500h10M3 6h10M3 8.500h7" stroke="#1e2a48" /></svg>
            <span className="absolute left-1.5 top-2.5 flex h-[18px] w-5 items-center justify-center rounded-full border border-[#999] bg-[#333b4a] text-xs font-semibold">22</span>
          </button>
          <div className="mr-1 h-10 w-px bg-[#5a6478]" />
        </div>
      </footer>
    </div>
  );
}
